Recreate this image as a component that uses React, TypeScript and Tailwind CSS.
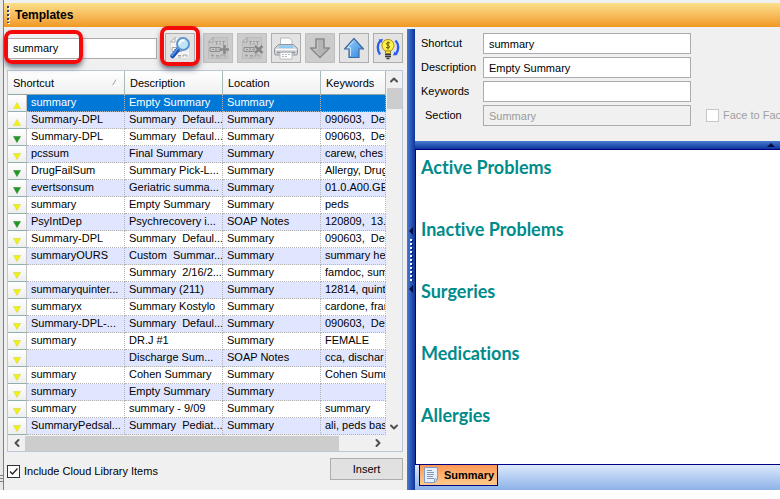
import React, { useState } from 'react';
import { ChevronDown, ChevronLeft, ChevronRight, ChevronUp } from 'lucide-react';

type Marker = 'up' | 'down' | 'green';

interface TemplateRow {
    marker: Marker;
    shortcut: string;
    description: string;
    location: string;
    keywords: string;
}

const rows: TemplateRow[] = [
    { marker: 'up', shortcut: 'summary', description: 'Empty Summary', location: 'Summary', keywords: '' },
    { marker: 'up', shortcut: 'Summary-DPL', description: 'Summary  Defaul...', location: 'Summary', keywords: '090603,  Def' },
    { marker: 'green', shortcut: 'Summary-DPL', description: 'Summary  Defaul...', location: 'Summary', keywords: '090603,  Def' },
    { marker: 'down', shortcut: 'pcssum', description: 'Final Summary', location: 'Summary', keywords: 'carew, ches' },
    { marker: 'green', shortcut: 'DrugFailSum', description: 'Summary Pick-L...', location: 'Summary', keywords: 'Allergy, Drug' },
    { marker: 'green', shortcut: 'evertsonsum', description: 'Geriatric summa...', location: 'Summary', keywords: '01.0.A00.GE' },
    { marker: 'down', shortcut: 'summary', description: 'Empty Summary', location: 'Summary', keywords: 'peds' },
    { marker: 'green', shortcut: 'PsyIntDep', description: 'Psychrecovery i...', location: 'SOAP Notes', keywords: '120809,  13.0' },
    { marker: 'down', shortcut: 'Summary-DPL', description: 'Summary  Defaul...', location: 'Summary', keywords: '090603,  Def' },
    { marker: 'down', shortcut: 'summaryOURS', description: 'Custom  Summar...', location: 'Summary', keywords: 'summary he' },
    { marker: 'down', shortcut: '', description: 'Summary  2/16/2...', location: 'Summary', keywords: 'famdoc, sum' },
    { marker: 'down', shortcut: 'summaryquinter...', description: 'Summary (211)', location: 'Summary', keywords: '12814, quinte' },
    { marker: 'down', shortcut: 'summaryx', description: 'Summary Kostylo', location: 'Summary', keywords: 'cardone, fran' },
    { marker: 'down', shortcut: 'Summary-DPL-...', description: 'Summary  Defaul...', location: 'Summary', keywords: '090603,  Def' },
    { marker: 'down', shortcut: 'summary', description: 'DR.J #1', location: 'Summary', keywords: 'FEMALE' },
    { marker: 'down', shortcut: '', description: 'Discharge Sum...', location: 'SOAP Notes', keywords: 'cca, dischar' },
    { marker: 'down', shortcut: 'summary', description: 'Cohen Summary', location: 'Summary', keywords: 'Cohen Summ' },
    { marker: 'down', shortcut: 'summary', description: 'Empty Summary', location: 'Summary', keywords: '' },
    { marker: 'down', shortcut: 'summary', description: 'summary - 9/09', location: 'Summary', keywords: 'summary' },
    { marker: 'down', shortcut: 'SummaryPedsal...', description: 'Summary  Pediat...', location: 'Summary', keywords: 'ali, peds bas' },
];

const sections = ['Active Problems', 'Inactive Problems', 'Surgeries', 'Medications', 'Allergies'];

const RowMarker = ({ marker }: { marker: Marker }) => (
    <svg width="8" height="7" viewBox="0 0 8 7" className="mx-auto mt-1 block">
        {marker === 'up' ? (
            <path d="M4 0.5L7.5 6.5H0.5Z" fill="#f4f400" stroke="#d8d860" strokeWidth="0.6" />
        ) : (
            <path
                d="M0.5 0.5H7.5L4 6.5Z"
                fill={marker === 'green' ? '#1e9a1e' : '#f4f400'}
                stroke={marker === 'green' ? '#3a8a3a' : '#d0d060'}
                strokeWidth="0.6"
            />
        )}
    </svg>
);

// Sheet of paper with the small "TEM" text block, shared by three buttons
const Sheet = ({ dim = false }: { dim?: boolean }) => {
    const ink = dim ? '#a0a0a0' : '#a8a8a8';
    return (
        <>
            <path d="M7 1.5H21.5V22.5H2.5V6Z" fill={dim ? '#c6c6c6' : '#f4f4f4'} stroke={dim ? '#bcbcbc' : '#dcdcdc'} />
            <path d="M7 1.5V6H2.5Z" fill={dim ? '#dadada' : '#fff'} stroke={ink} />
            <path d="M9 5.5h3M10.5 6v3M13 5.5h2M13 8h2M16 5.5h3M17.5 6v3M5 19.5h3M6.5 18v3M10 19.5h3M10 21h3M15 21v-2h4v2" stroke={ink} fill="none" />
            <path d="M4 11.5h10v4H4zM6 13.5h2M10 11.5v4M12 13.5h1" stroke={dim ? '#8e8e8e' : ink} fill="none" />
        </>
    );
};

const FindIcon = () => (
    <svg width="24" height="24" viewBox="0 0 24 24">
        <Sheet />
        <path d="M10.5 13L4.5 20" stroke="#1d4fb8" strokeWidth="4.4" strokeLinecap="round" />
        <path d="M9.8 12.5L4 19.3" stroke="#4f9bee" strokeWidth="1.8" strokeLinecap="round" />
        <circle cx="15" cy="8" r="6" fill="#bfe4f6" stroke="#5f95cc" strokeWidth="2" />
        <path d="M11.5 8.5a3.8 3.8 0 0 1 5-4" stroke="#fff" strokeWidth="2" fill="none" />
    </svg>
);

const AddIcon = () => (
    <svg width="24" height="24" viewBox="0 0 24 24">
        <Sheet dim />
        <path d="M18.5 9v9M14 13.5h9" stroke="#8a8a8a" strokeWidth="2.6" />
    </svg>
);

const DeleteIcon = () => (
    <svg width="24" height="24" viewBox="0 0 24 24">
        <Sheet dim />
        <path d="M15 10l7.5 7M22.5 10l-7.5 7" stroke="#858585" strokeWidth="2.4" />
    </svg>
);

const PrintIcon = () => (
    <svg width="24" height="24" viewBox="0 0 24 24">
        <path d="M6.5 2H15.5L18 4.5V11H6.5Z" fill="#fdfdfd" stroke="#b5bcc4" />
        <path d="M4.5 8.5H19.5L22 11Q23.5 12 23.5 13.5V17.5Q23.5 19 22 19H2Q0.5 19 0.5 17.5V13.5Q0.5 12 2 11Z" fill="#ced2d6" stroke="#8f969d" />
        <path d="M5 9.5H19V12H5Z" fill="#8ccbf6" />
        <path d="M1.5 13.5H22.5" stroke="#f6f7f8" strokeWidth="1.5" />
        <path d="M3 16.5H21" stroke="#8a9097" strokeWidth="1.5" />
        <path d="M6 16.5H18V23H6Z" fill="#fff" stroke="#b8bcc0" />
        <path d="M8 18.5H16M8 20.5H14" stroke="#b5b5b5" strokeDasharray="2 1" />
    </svg>
);

const DownIcon = () => (
    <svg width="24" height="24" viewBox="0 0 24 24">
        <path d="M8 3H16V12H21.5L12 21.5L2.5 12H8Z" fill="#b4b4b4" stroke="#8c8c8c" strokeWidth="1.6" strokeLinejoin="round" />
        <path d="M9.5 4.5V13.5H6L12 19.5" stroke="#c6c6c6" fill="none" />
    </svg>
);

const UpIcon = () => (
    <svg width="24" height="24" viewBox="0 0 24 24">
        <defs>
            <linearGradient id="upFill" x1="0" y1="0" x2="1" y2="1">
                <stop offset="0" stopColor="#a6d4fb" />
                <stop offset="1" stopColor="#2d86e4" />
            </linearGradient>
        </defs>
        <path d="M12 2.5L21.5 13H17V21.5H7V13H2.5Z" fill="url(#upFill)" stroke="#3c6c9e" strokeWidth="1.2" strokeLinejoin="round" />
        <path d="M12 4.5L5.5 11.7H8.5V20" stroke="#cfe8fd" fill="none" />
    </svg>
);

const BulbIcon = () => (
    <svg width="24" height="24" viewBox="0 0 24 24">
        <path d="M4.5 4.5C1 8 1 14 4 18.5" stroke="#2a5cec" strokeWidth="2.4" fill="none" />
        <path d="M2.5 3.5L7 3L5.5 7Z" fill="#2a5cec" />
        <path d="M19.5 4.500C23 8 23 14 20 18" stroke="#2a5cec" strokeWidth="2.4" fill="none" />
        <path d="M21.5 19L17 19.500L18.5 15.500Z" fill="#2a5cec" />
        <circle cx="12" cy="9.500" r="6" fill="#fff24a" stroke="#a58d12" />
        <path d="M9.5 15h5v2.500h-5z" fill="#ffe93c" stroke="#8a7410" strokeWidth="0.8" />
        <path d="M14 7c-3.5-1.3-5 1-2 2.300s1.500 3.400-2 2.200M12 5.500v8" stroke="#5e4a00" fill="none" />
        <path d="M9 18.500h6M9 20.500h6M10.500 22.500h3" stroke="#3c3c3c" strokeWidth="1.5" />
    </svg>
);

const PageIcon = () => (
    <svg width="16" height="16" viewBox="0 0 16 16">
        <path d="M1.5 0.5H14.5V12L11.5 15.5H1.5Z" fill="#e4efff" stroke="#7d9cd0" />
        <path d="M14.5 12H11.5V15.5Z" fill="#fff" stroke="#7d9cd0" />
        <path d="M4 3.5h5M4 5.5h7M4 7.5h7M4 9.5h6M4 11.5h7" stroke="#8b96a8" />
    </svg>
);

const toolButtons = [
    { name: 'Add template', icon: <AddIcon />, disabled: true },
    { name: 'Delete template', icon: <DeleteIcon />, disabled: true },
    { name: 'Print', icon: <PrintIcon />, disabled: false },
    { name: 'Download', icon: <DownIcon />, disabled: true },
    { name: 'Upload', icon: <UpIcon />, disabled: false },
    { name: 'Suggest', icon: <BulbIcon />, disabled: false },
];

const toolButtonClass = 'flex size-[30px] shrink-0 items-center justify-center border border-[#adadad] bg-[#e3e3e3] disabled:border-[#bfbfbf] disabled:bg-[#cccccc]';

const headClass = 'h-6 border-r border-b border-r-[#a9bcbc] border-b-[#8fa9a9] bg-linear-to-b from-white to-[#f0f0f0] p-0 pl-[5px] text-left leading-4 font-normal';

const cellClass = 'h-[17px] overflow-hidden border-r border-b border-dotted border-[#b4b4b4] p-0 pl-1 align-top leading-[14px] whitespace-pre';

const TemplateTable = () => {
    const [selected, setSelected] = useState(0);

    return (
        <table className="w-full table-fixed border-separate border-spacing-0">
            <colgroup>
                <col className="w-[19px]" />
                <col className="w-[98px]" />
                <col className="w-[98px]" />
                <col className="w-[98px]" />
                <col />
            </colgroup>
            <thead>
                <tr>
                    <th colSpan={2} className={headClass}>
                        <div className="flex items-start justify-between pr-1">
                            Shortcut
                            <svg width="8" height="7" viewBox="0 0 8 7" className="mt-1">
                                <path d="M0.5 6.5L4 0.5" stroke="#a0a0a0" />
                                <path d="M4 0.5L7.5 6.5H0.5" stroke="#fff" fill="none" />
                            </svg>
                        </div>
                    </th>
                    <th className={headClass}>Description</th>
                    <th className={headClass}>Location</th>
                    <th className={headClass}>Keywords</th>
                </tr>
            </thead>
            <tbody>
                {rows.map((row, i) => (
                    <tr
                        key={i}
                        onClick={() => setSelected(i)}
                        className={i === selected ? 'bg-[#0078d7] text-white' : i % 2 ? 'bg-[#e0e6ff]' : 'bg-white'}
                    >
                        <td className="h-[17px] border-r border-b border-r-[#c4c4c4] border-b-[#8fb0b0] bg-linear-to-b from-white to-[#eeeeee] p-0">
                            <RowMarker marker={row.marker} />
                        </td>
                        <td className={cellClass}>{row.shortcut}</td>
                        <td className={cellClass}>{row.description}</td>
                        <td className={cellClass}>{row.location}</td>
                        <td className={cellClass}>{row.keywords}</td>
                    </tr>
                ))}
            </tbody>
        </table>
    );
};

const LibraryPane = () => {
    const [query, setQuery] = useState('summary');
    const [cloud, setCloud] = useState(true);

    return (
        <div className="flex w-[403px] shrink-0 flex-col pr-1 pl-[3px]">
            <div className="flex items-center gap-1 pt-1 pb-[7px]">
                <div className="relative mr-1 min-w-0 flex-1">
                    <input
                        type="text"
                        aria-label="Search templates"
                        value={query}
                        onChange={(e) => setQuery(e.target.value)}
                        className="block h-[21px] w-full border border-[#ababab] bg-white px-[5px] outline-none"
                    />
                    <div className="pointer-events-none absolute -top-2 -left-[3px] h-[34px] w-[79px] rounded-lg border-4 border-[#f50a0a] shadow-md shadow-gray-500" />
                </div>
                <div className="relative mr-1">
                    <button aria-label="Find" className={toolButtonClass}><FindIcon /></button>
                    <div className="pointer-events-none absolute -inset-x-[5px] -top-[7px] -bottom-[3px] rounded-lg border-4 border-[#f50a0a] shadow-md shadow-gray-500" />
                </div>
                {toolButtons.map((b) => (
                    <button key={b.name} aria-label={b.name} disabled={b.disabled} className={toolButtonClass}>{b.icon}</button>
                ))}
            </div>

            <div className="border border-[#b9c7d6] bg-[#f0f0f0]">
                <div className="flex">
                    <div className="min-w-0 flex-1 overflow-hidden">
                        <TemplateTable />
                    </div>
                    <div className="flex w-4 flex-col items-center text-[#505050]">
                        <button aria-label="Scroll up" className="flex h-[17px] w-full items-center justify-center"><ChevronUp size={12} strokeWidth={4} /></button>
                        <div className="h-[21px] w-[15px] bg-[#cdcdcd]" />
                        <button aria-label="Scroll down" className="mt-auto flex h-[17px] w-full items-center justify-center"><ChevronDown size={12} strokeWidth={4} /></button>
                    </div>
                </div>
                <div className="flex h-4 items-center pr-4 text-[#505050]">
                    <button aria-label="Scroll left" className="flex w-[17px] items-center justify-center"><ChevronLeft size={12} strokeWidth={4} /></button>
                    <div className="h-[15px] w-[314px] bg-[#cdcdcd]" />
                    <button aria-label="Scroll right" className="ml-auto flex w-[17px] items-center justify-center"><ChevronRight size={12} strokeWidth={4} /></button>
                </div>
            </div>

            <div className="flex items-start justify-between pt-[6px] pb-[10px]">
                <label className="mt-[5px] flex items-center gap-1 leading-4">
                    <span className="relative size-[13px]">
                        <input
                            type="checkbox"
                            checked={cloud}
                            onChange={() => setCloud(!cloud)}
                            className="block size-[13px] appearance-none border border-[#333333] bg-white"
                        />
                        {cloud && (
                            <svg viewBox="0 0 13 13" className="pointer-events-none absolute inset-0 size-[13px]">
                                <path d="M3 6.5L5.5 9L10.5 3.5" stroke="#222" strokeWidth="1.3" fill="none" />
                            </svg>
                        )}
                    </span>
                    Include Cloud Library Items
                </label>
                <button className="h-[22px] w-[73px] border border-[#adadad] bg-[#e1e1e1]">Insert</button>
            </div>
        </div>
    );
};

const VerticalSplitter = () => (
    <div className="flex w-2 shrink-0 flex-col items-center justify-center gap-1 self-stretch bg-linear-to-r from-[#4a7ad0] to-[#0c359c]">
        <svg width="4" height="8" viewBox="0 0 4 8"><path d="M4 0V8L0 4Z" fill="#000c40" /></svg>
        <svg width="4" height="42" viewBox="0 0 4 42">
            <path d="M3 1V42" stroke="#001a60" strokeWidth="2" strokeDasharray="2 2" />
            <path d="M2 0V42" stroke="#fff" strokeWidth="2" strokeDasharray="2 2" />
        </svg>
        <svg width="4" height="8" viewBox="0 0 4 8"><path d="M4 0V8L0 4Z" fill="#000c40" /></svg>
    </div>
);

const fieldClass = 'h-[21px] w-[208px] shrink-0 border border-[#ababb0] bg-white px-[5px] outline-none disabled:bg-[#f0f0f0] disabled:text-[#9b9b9b]';

const DetailForm = () => (
    <div className="flex flex-col gap-[3px] pt-1 pb-[15px] pl-[6px] whitespace-nowrap">
        <div className="flex items-center">
            <label htmlFor="shortcut" className="w-[62px] shrink-0">Shortcut</label>
            <input id="shortcut" type="text" defaultValue="summary" className={fieldClass} />
        </div>
        <div className="flex items-center">
            <label htmlFor="description" className="w-[62px] shrink-0">Description</label>
            <input id="description" type="text" defaultValue="Empty Summary" className={fieldClass} />
        </div>
        <div className="flex items-center">
            <label htmlFor="keywords" className="w-[62px] shrink-0">Keywords</label>
            <input id="keywords" type="text" defaultValue="" className={fieldClass} />
        </div>
        <div className="flex items-center">
            <label htmlFor="section" className="w-[62px] shrink-0 pl-1">Section</label>
            <input id="section" type="text" defaultValue="Summary" disabled className={fieldClass} />
            <label className="ml-[15px] flex items-center gap-1 text-[#a0a0a0]">
                <input type="checkbox" disabled className="size-[13px] shrink-0 appearance-none border border-[#c8c8c8] bg-white" />
                Face to Face
            </label>
        </div>
    </div>
);

const DetailPane = () => (
    <div className="flex min-w-0 flex-1 flex-col overflow-hidden">
        <DetailForm />
        <div className="flex h-2 items-center justify-end bg-linear-to-b from-[#4a7ad0] to-[#0c359c] pr-[5px]">
            <svg width="8" height="4" viewBox="0 0 8 4"><path d="M0 4H8L4 0Z" fill="#000c40" /></svg>
        </div>
        <div className="flex flex-1 flex-col gap-[38px] border-t border-l border-[#000080] bg-white pt-[5px] pl-[5px]">
            {sections.map((s) => (
                <h2 key={s} className="font-['Lato',sans-serif] text-[18px] leading-6 font-bold text-[#008b8b] [font-variant-ligatures:none]">{s}</h2>
            ))}
        </div>
        <div className="flex h-[26px] items-start border-t border-[#000080] bg-linear-to-b from-[#dbe9fc] to-[#8db2e8] pl-1">
            <button className="flex h-[21px] items-center gap-[5px] border border-t-0 border-[#000080] bg-linear-to-b from-[#ff9755] to-[#ffcb8b] pr-[3px] pl-[3px] font-bold">
                <PageIcon />
                Summary
            </button>
        </div>
    </div>
);

export default function App() {
    return (
        <div className="flex overflow-hidden bg-[#f0f0f0] font-['Liberation_Sans',Arial,sans-serif] text-[11px] text-black">
            <div className="flex w-1 shrink-0 flex-col justify-end gap-[2px] border-r border-[#808080] bg-[#e8e8e8] pb-2">
                <div className="h-px bg-[#808080]" />
                <div className="h-px bg-[#808080]" />
                <div className="h-px bg-[#808080]" />
            </div>
            <div className="flex min-w-0 flex-1 flex-col pt-[3px]">
                <div className="flex h-6 items-center gap-[5px] bg-linear-to-b from-[#fbe08a] to-[#f0981c] pl-[3px]">
                    <svg width="3" height="18" viewBox="0 0 3 18">
                        <path d="M2 1V18" stroke="#fff" strokeWidth="2" strokeDasharray="2 2" />
                        <path d="M1 0V17" stroke="#27418a" strokeWidth="2" strokeDasharray="2 2" />
                    </svg>
                    <h1 className="text-[12px] font-bold">Templates</h1>
                </div>
                <div className="flex pt-[2px]">
                    <LibraryPane />
                    <VerticalSplitter />
                    <DetailPane />
                </div>
            </div>
        </div>
    );
}
